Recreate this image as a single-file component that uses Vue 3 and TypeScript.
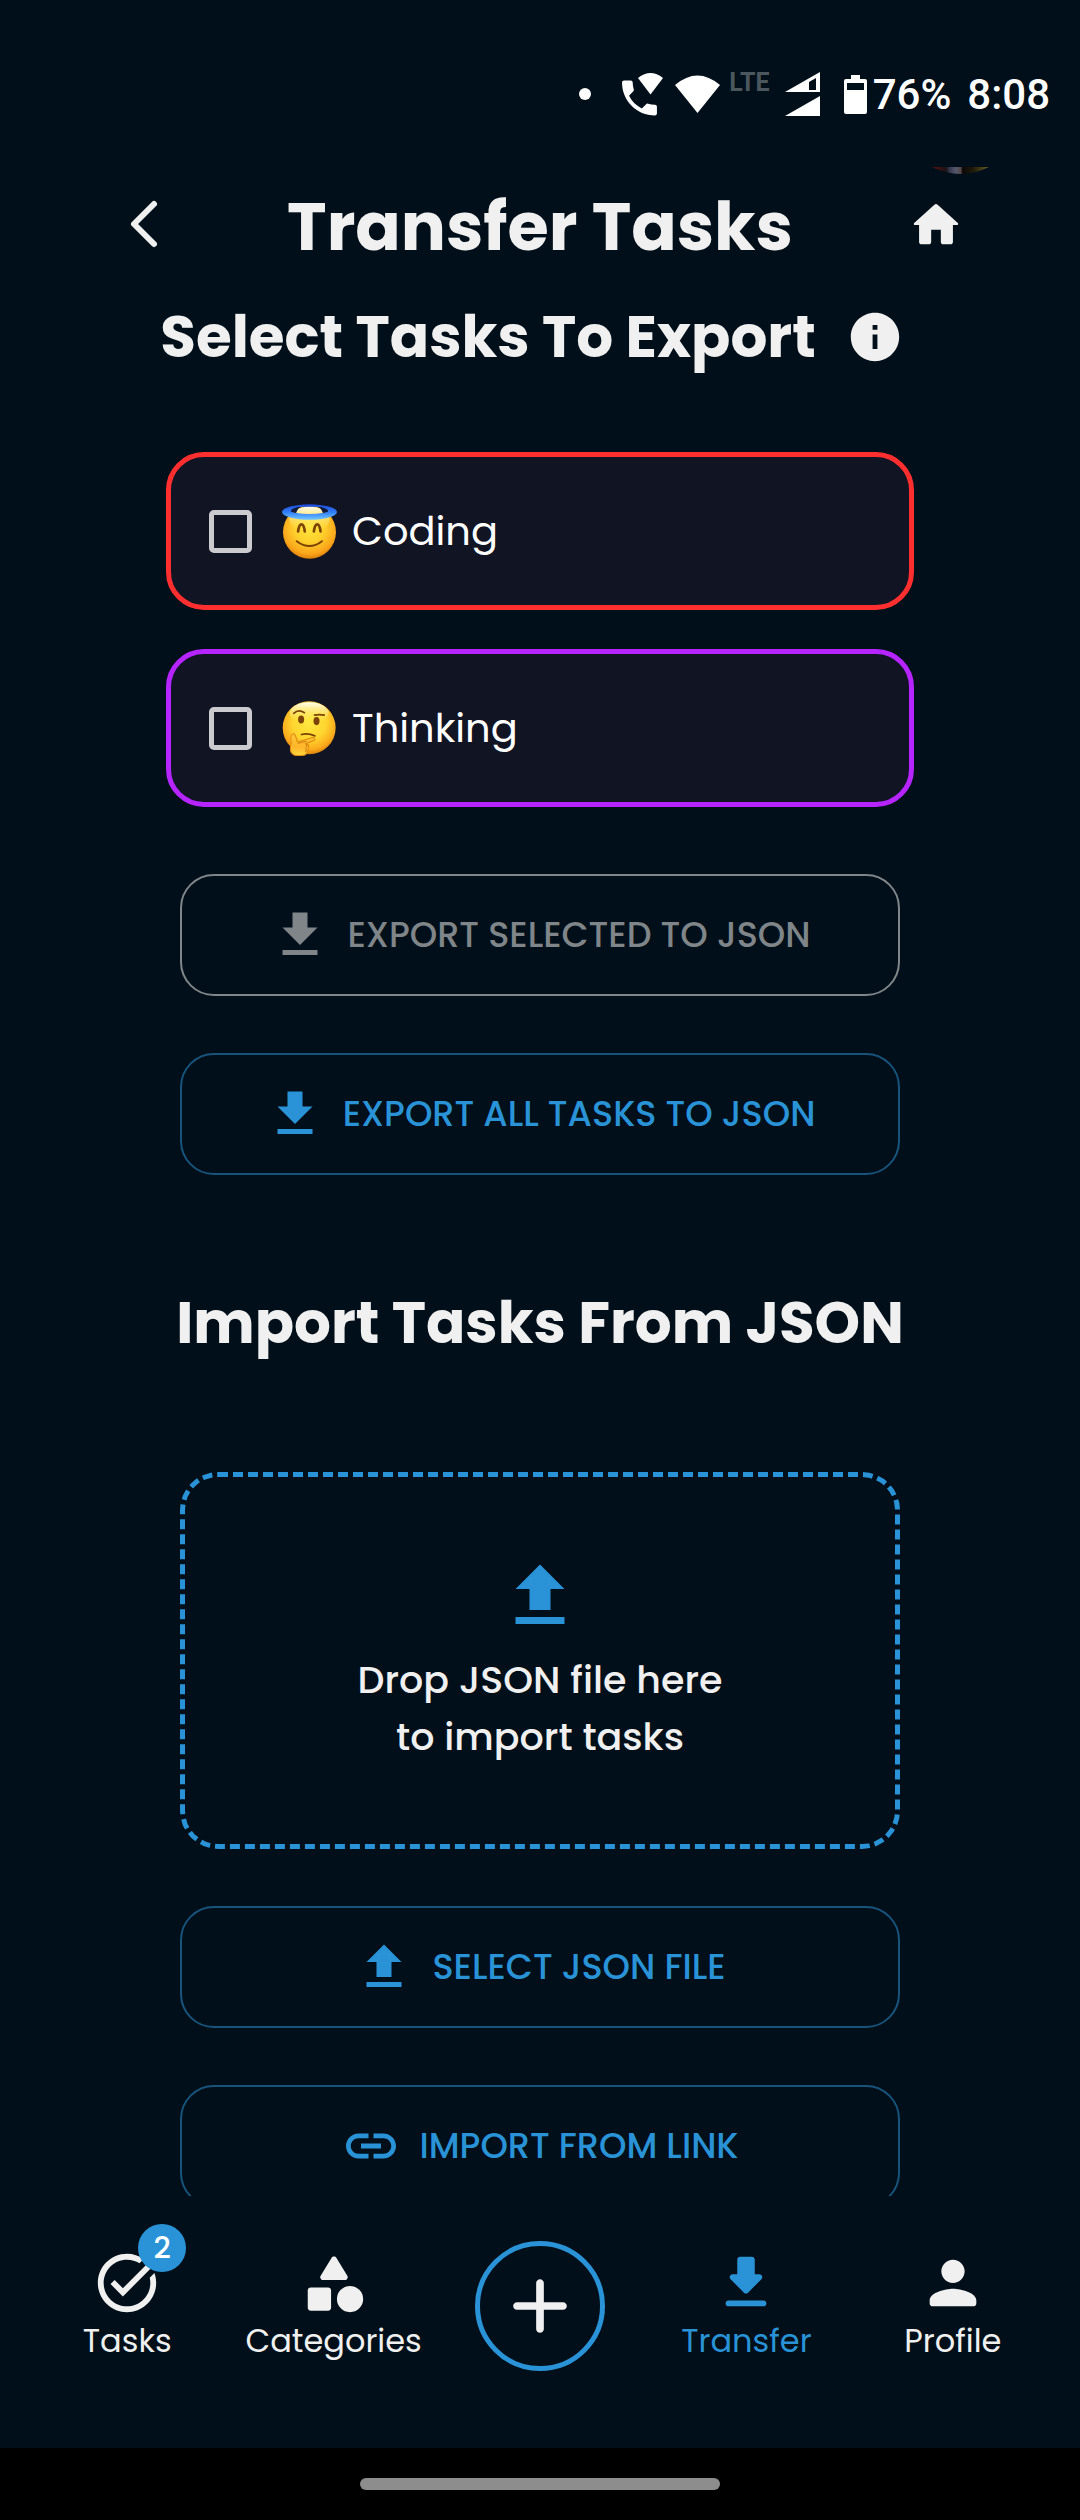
<script setup lang="ts">
import { computed, ref } from 'vue'

interface Task {
  id: string
  name: string
  color: string
}

interface NavItem {
  label: string
  href: string
  icon: string
  badge?: number
  active?: boolean
}

const icons = {
  download: 'M19 9h-4V3H9v6H5l7 7zM5 18v2h14v-2z',
  upload: 'M5 20h14v-2H5zm0-10h4v6h6v-6h4l-7-7z',
  link: 'M3.9 12c0-1.71 1.39-3.1 3.1-3.1h4V7H7c-2.76 0-5 2.24-5 5s2.24 5 5 5h4v-1.9H7c-1.71 0-3.1-1.39-3.1-3.1M8 13h8v-2H8zm9-6h-4v1.9h4c1.71 0 3.1 1.39 3.1 3.1s-1.39 3.1-3.1 3.1h-4V17h4c2.76 0 5-2.24 5-5s-2.24-5-5-5',
  info: 'M12 2C6.48 2 2 6.48 2 12s4.48 10 10 10 10-4.48 10-10S17.52 2 12 2m1 15h-2v-6h2zm0-8h-2V7h2z',
  home: 'M10 19v-5h4v5c0 .55.45 1 1 1h3c.55 0 1-.45 1-1v-7h1.7c.46 0 .68-.57.33-.87L12.67 3.6c-.38-.34-.96-.34-1.34 0l-8.36 7.53c-.34.3-.13.87.33.87H5v7c0 .55.45 1 1 1h3c.55 0 1-.45 1-1',
  add: 'M18 13h-5v5c0 .55-.45 1-1 1s-1-.45-1-1v-5H6c-.55 0-1-.45-1-1s.45-1 1-1h5V6c0-.55.45-1 1-1s1 .45 1 1v5h5c.55 0 1 .45 1 1s-.45 1-1 1',
  tasks:
    'M22 5.18 10.59 16.6l-4.24-4.24 1.41-1.41 2.83 2.83 10-10zm-2.21 5.04c.13.57.21 1.17.21 1.78 0 4.42-3.58 8-8 8s-8-3.58-8-8 3.58-8 8-8c1.58 0 3.04.46 4.28 1.25l1.44-1.44C16.1 2.67 14.13 2 12 2 6.48 2 2 6.48 2 12s4.48 10 10 10 10-4.48 10-10c0-1.19-.22-2.33-.6-3.39z',
  categories:
    'M11.15 3.4 7.43 9.48c-.41.66.07 1.52.85 1.52h7.43c.78 0 1.26-.86.85-1.52L12.85 3.4c-.39-.64-1.31-.64-1.7 0M17.5 13a4.5 4.5 0 1 0 0 9 4.5 4.5 0 0 0 0-9M4 21.5h6c.55 0 1-.45 1-1v-6c0-.55-.45-1-1-1H4c-.55 0-1 .45-1 1v6c0 .55.45 1 1 1',
  transfer:
    'M16.59 9H15V4c0-.55-.45-1-1-1h-4c-.55 0-1 .45-1 1v5H7.41c-.89 0-1.34 1.08-.71 1.71l4.59 4.59c.39.39 1.02.39 1.41 0l4.59-4.59c.63-.63.19-1.71-.7-1.71M5 19c0 .55.45 1 1 1h12c.55 0 1-.45 1-1s-.45-1-1-1H6c-.55 0-1 .45-1 1',
  profile:
    'M12 12c2.21 0 4-1.79 4-4s-1.79-4-4-4-4 1.79-4 4 1.79 4 4 4m0 2c-2.67 0-8 1.34-8 4v1c0 .55.45 1 1 1h14c.55 0 1-.45 1-1v-1c0-2.66-5.33-4-8-4',
}

const tasks: Task[] = [
  { id: 'coding', name: 'Coding', color: '#ff2f2f' },
  { id: 'thinking', name: 'Thinking', color: '#b624ff' },
]

const selected = ref<string[]>([])
const nothingSelected = computed(() => selected.value.length === 0)

const leftNav: NavItem[] = [
  { label: 'Tasks', href: '#tasks', icon: icons.tasks, badge: tasks.length },
  { label: 'Categories', href: '#categories', icon: icons.categories },
]
const rightNav: NavItem[] = [
  { label: 'Transfer', href: '#transfer', icon: icons.transfer, active: true },
  { label: 'Profile', href: '#profile', icon: icons.profile },
]
</script>

<template>
  <div class="app">
    <div class="status">
      <div class="status-row">
        <span class="dot"></span>
        <svg class="s-phone" viewBox="0 0 44 44" aria-hidden="true">
          <path
            transform="translate(-4.8 2.7) scale(1.94)"
            d="M20 15.5c-1.25 0-2.45-.2-3.57-.57-.35-.11-.74-.03-1.02.24l-2.2 2.2c-2.83-1.44-5.15-3.75-6.59-6.58l2.2-2.21c.28-.27.36-.66.25-1.01C8.7 6.45 8.5 5.25 8.5 4c0-.55-.45-1-1-1H4c-.55 0-1 .45-1 1 0 9.39 7.61 17 17 17 .55 0 1-.45 1-1v-3.500c0-.55-.45-1-1-1z"
          />
          <path d="M17 6Q29.500-4 42 6L29.500 22.500z" />
        </svg>
        <svg class="s-wifi" viewBox="0 0 45 38" aria-hidden="true">
          <path d="M0 10Q22.500-9 45 10L22.500 38z" />
        </svg>
        <span class="lte">LTE</span>
        <svg class="s-signal" viewBox="0 0 35 44" aria-hidden="true">
          <path fill-rule="evenodd" d="M0 20 35 0V20zM24 18h7V6l-7 4z" />
          <path d="M0 44 35 24V44z" />
        </svg>
        <svg class="s-battery" viewBox="0 0 23 39" aria-hidden="true">
          <path
            fill-rule="evenodd"
            d="M7 0h9v4h5a2 2 0 0 1 2 2v31a2 2 0 0 1-2 2H2a2 2 0 0 1-2-2V6a2 2 0 0 1 2-2h5zM3 8v7h17V8z"
          />
        </svg>
        <span class="s-text">76%</span>
        <span class="s-text s-clock">8:08</span>
      </div>
    </div>

    <header class="top">
      <svg class="avatar" viewBox="0 0 57 8" aria-hidden="true">
        <defs>
          <linearGradient id="avatar-fill" x1="0" x2="1" y1="0" y2="0">
            <stop offset="0" stop-color="#5a1016" />
            <stop offset=".25" stop-color="#1c1214" />
            <stop offset=".3" stop-color="#34364c" />
            <stop offset=".42" stop-color="#55586f" />
            <stop offset=".5" stop-color="#54484a" />
            <stop offset=".54" stop-color="#0b0806" />
            <stop offset=".72" stop-color="#1f1a0a" />
            <stop offset="1" stop-color="#6b5d22" />
          </linearGradient>
        </defs>
        <path d="M0 0h57Q28.500 14 0 0z" fill="url(#avatar-fill)" />
      </svg>
      <button class="icon-btn" type="button" aria-label="Back">
        <svg class="chevron" viewBox="0 0 58 58" aria-hidden="true">
          <path d="M39 8 19 28 39 48" />
        </svg>
      </button>
      <h1>Transfer Tasks</h1>
      <button class="icon-btn" type="button" aria-label="Home">
        <svg class="i-head" viewBox="0 0 24 24" aria-hidden="true"><path :d="icons.home" /></svg>
      </button>
    </header>

    <main class="content">
      <div class="heading-row">
        <h2>Select Tasks To Export</h2>
        <button class="info" type="button" aria-label="More information">
          <svg class="i-head" viewBox="0 0 24 24" aria-hidden="true"><path :d="icons.info" /></svg>
        </button>
      </div>

      <div class="cards">
        <label v-for="task in tasks" :key="task.id" class="card" :style="{ borderColor: task.color }">
          <input v-model="selected" type="checkbox" :value="task.id" />
          <svg v-if="task.id === 'coding'" class="emoji" viewBox="0 0 164 164" aria-hidden="true">
            <defs>
              <radialGradient id="face-a" cx=".5" cy=".4" r=".64">
                <stop offset="0" stop-color="#ffe53c" />
                <stop offset=".45" stop-color="#ffd02c" />
                <stop offset=".8" stop-color="#fba51a" />
                <stop offset="1" stop-color="#cf7006" />
              </radialGradient>
              <linearGradient id="shine-a" x1="0" x2="0" y1="0" y2="1">
                <stop offset="0" stop-color="#fffdf0" />
                <stop offset="1" stop-color="#ffe53c" stop-opacity="0" />
              </linearGradient>
              <linearGradient id="halo" x1="0" x2="0" y1="0" y2="1">
                <stop offset="0" stop-color="#1d49d8" />
                <stop offset=".55" stop-color="#3484fb" />
                <stop offset="1" stop-color="#74c8ff" />
              </linearGradient>
            </defs>
            <circle cx="82" cy="84" r="79" fill="url(#face-a)" />
            <ellipse cx="82" cy="46" rx="60" ry="38" fill="url(#shine-a)" />
            <path
              d="M0 24a82 23 0 1 0 164 0a82 23 0 1 0-164 0zM27 20a55 12 0 1 1 110 0a55 10 0 1 1-110 0z"
              fill="url(#halo)"
              fill-rule="evenodd"
            />
            <path
              d="M27 21Q36 10 56 8Q46 14 42 27Q29 26 27 21zM137 21Q128 10 108 8Q118 14 122 27Q135 26 137 21z"
              fill="#101a3c"
            />
            <path
              d="M48 82Q51 61 58 61Q65 61 68 82M95 82Q98 61 105 61Q112 61 115 82"
              fill="none"
              stroke="#7b4406"
              stroke-width="8"
              stroke-linecap="round"
            />
            <path
              d="M44 111Q82 140 119 111"
              fill="none"
              stroke="#7b4406"
              stroke-width="6"
              stroke-linecap="round"
            />
          </svg>
          <svg v-else class="emoji" viewBox="0 0 164 164" aria-hidden="true">
            <defs>
              <radialGradient id="face-b" cx=".5" cy=".4" r=".64">
                <stop offset="0" stop-color="#ffe93f" />
                <stop offset=".5" stop-color="#ffd52f" />
                <stop offset=".8" stop-color="#fbaa1c" />
                <stop offset="1" stop-color="#cf7006" />
              </radialGradient>
              <linearGradient id="shine-b" x1="0" x2="0" y1="0" y2="1">
                <stop offset="0" stop-color="#fffef4" />
                <stop offset="1" stop-color="#ffe93f" stop-opacity="0" />
              </linearGradient>
              <linearGradient id="hand" x1="0" x2="0" y1="0" y2="1">
                <stop offset="0" stop-color="#ffc93a" />
                <stop offset=".6" stop-color="#ffb52a" />
                <stop offset="1" stop-color="#ffd83d" />
              </linearGradient>
            </defs>
            <circle cx="81" cy="80" r="79" fill="url(#face-b)" />
            <ellipse cx="81" cy="36" rx="58" ry="32" fill="url(#shine-b)" />
            <ellipse cx="57" cy="55" rx="9" ry="12" fill="#7b4406" />
            <ellipse cx="103" cy="60" rx="9" ry="12" fill="#7b4406" />
            <path
              d="M35 37Q49 23 67 35M97 42Q111 39 126 42M58 100Q78 95 98 104"
              fill="none"
              stroke="#7b4406"
              stroke-width="5"
              stroke-linecap="round"
            />
            <path
              d="M32 98C40 96 41 107 46 122L91 109Q101 109 97 117L74 126Q82 132 78 141Q78 156 68 161Q52 166 36 161Q25 157 25 142Q25 133 28 124Q23 103 32 98z"
              fill="url(#hand)"
              stroke="#e08a10"
              stroke-width="3"
              stroke-linejoin="round"
            />
            <path
              d="M48 126 72 120M70 127Q76 131 73 137M70 142Q75 146 70 151"
              fill="none"
              stroke="#d07c0c"
              stroke-width="3"
              stroke-linecap="round"
            />
          </svg>
          <span>{{ task.name }}</span>
        </label>
      </div>

      <div class="column">
        <button class="action" type="button" :disabled="nothingSelected">
          <svg viewBox="0 0 24 24" aria-hidden="true"><path :d="icons.download" /></svg>
          <span>EXPORT SELECTED TO JSON</span>
        </button>
        <button class="action" type="button">
          <svg viewBox="0 0 24 24" aria-hidden="true"><path :d="icons.download" /></svg>
          <span>EXPORT ALL TASKS TO JSON</span>
        </button>
      </div>

      <h2 class="import-title">Import Tasks From JSON</h2>

      <div class="column import">
        <div class="drop">
          <svg viewBox="0 0 24 24" aria-hidden="true"><path :d="icons.upload" /></svg>
          <p>Drop JSON file here<br />to import tasks</p>
        </div>
        <button class="action" type="button">
          <svg viewBox="0 0 24 24" aria-hidden="true"><path :d="icons.upload" /></svg>
          <span>SELECT JSON FILE</span>
        </button>
        <button class="action" type="button">
          <svg viewBox="0 0 24 24" aria-hidden="true"><path :d="icons.link" /></svg>
          <span>IMPORT FROM LINK</span>
        </button>
      </div>
    </main>

    <nav class="nav">
      <a v-for="item in leftNav" :key="item.label" class="nav-item" :href="item.href">
        <span class="nav-icon">
          <svg viewBox="0 0 24 24" aria-hidden="true"><path :d="item.icon" /></svg>
          <span v-if="item.badge" class="badge">{{ item.badge }}</span>
        </span>
        <span class="nav-label">{{ item.label }}</span>
      </a>
      <div class="nav-item">
        <button class="fab" type="button" aria-label="Add task">
          <svg viewBox="0 0 24 24" aria-hidden="true"><path :d="icons.add" /></svg>
        </button>
      </div>
      <a
        v-for="item in rightNav"
        :key="item.label"
        class="nav-item"
        :class="{ active: item.active }"
        :href="item.href"
      >
        <span class="nav-icon">
          <svg viewBox="0 0 24 24" aria-hidden="true"><path :d="item.icon" /></svg>
        </span>
        <span class="nav-label">{{ item.label }}</span>
      </a>
    </nav>

    <div class="gesture"><span></span></div>
  </div>
</template>

<style>
body {
  margin: 0;
  background: #000f19;
}
</style>

<style scoped>
.app {
  --blue: #2a93d7;
  --blue-dim: #17537b;
  --light: #f0f0f0;
  --grey: #7f8588;
  box-sizing: border-box;
  height: 100vh;
  display: flex;
  flex-direction: column;
  background: #000f19;
  color: var(--light);
  font-family: Poppins, Inter, "Noto Sans", sans-serif;
}

.app *,
.app *::before {
  box-sizing: border-box;
}

svg {
  display: block;
  flex: none;
  fill: currentColor;
}

button {
  font: inherit;
  color: inherit;
  background: none;
  border: 0;
  padding: 0;
  margin: 0;
  cursor: pointer;
}

/* Status bar */
.status {
  flex: none;
  height: 167px;
  padding: 72px 30px 0;
  color: #fff;
}

.status-row {
  display: flex;
  align-items: center;
  justify-content: flex-end;
  height: 44px;
  font-family: Roboto, sans-serif;
}

.dot {
  width: 12px;
  height: 12px;
  border-radius: 50%;
  background: #fff;
}

.s-phone {
  width: 44px;
  height: 44px;
  margin-left: 30px;
}

.s-wifi {
  width: 45px;
  height: 38px;
  margin-left: 10px;
}

.lte {
  align-self: flex-start;
  margin-left: 9px;
  font-size: 25px;
  line-height: 22px;
  font-weight: 700;
  color: #4c565d;
}

.s-signal {
  width: 35px;
  height: 44px;
  margin-left: 15px;
}

.s-battery {
  width: 23px;
  height: 39px;
  margin-left: 24px;
}

.s-text {
  margin-left: 6px;
  padding-top: 2px;
  font-size: 42px;
  line-height: 44px;
  font-weight: 500;
}

.s-clock {
  margin-left: 16px;
}

/* Header */
.top {
  position: relative;
  flex: none;
  display: flex;
  align-items: flex-start;
  justify-content: space-between;
  padding: 12px 10% 0;
}

.avatar {
  position: absolute;
  top: 0;
  right: 91px;
  width: 57px;
  height: 8px;
}

.icon-btn {
  display: flex;
  align-items: center;
  justify-content: center;
  width: 72px;
  height: 92px;
}

.i-head {
  width: 58px;
  height: 58px;
}

.chevron {
  width: 58px;
  height: 58px;
}

.chevron path {
  fill: none;
  stroke: currentColor;
  stroke-width: 6;
  stroke-linecap: round;
  stroke-linejoin: round;
}

h1,
h2,
p {
  margin: 0;
}

h1 {
  font-size: 67px;
  line-height: 96px;
  font-weight: 700;
}

h2 {
  font-size: 58px;
  line-height: 72px;
  font-weight: 700;
  white-space: nowrap;
}

/* Scrolling content */
.content {
  flex: 1;
  min-height: 0;
  overflow-y: auto;
  scrollbar-width: none;
  display: flex;
  flex-direction: column;
  align-items: center;
  padding: 26px 0 32px;
}

.content > * {
  flex: none;
}

.heading-row {
  display: flex;
  align-items: center;
  gap: 30px;
}

.info {
  padding-right: 16px;
}

.cards {
  width: 748px;
  max-width: calc(100% - 64px);
  margin-top: 79px;
  display: flex;
  flex-direction: column;
  gap: 39px;
}

.card {
  display: flex;
  align-items: center;
  height: 158px;
  padding: 0 38px;
  border: 5px solid;
  border-radius: 38px;
  background: #101423;
  color: #fff;
  font-size: 40px;
  line-height: 56px;
  cursor: pointer;
}

.card input {
  appearance: none;
  flex: none;
  width: 43px;
  height: 43px;
  margin: 0;
  border: 5px solid #cbcbcf;
  border-radius: 5px;
}

.card input:checked {
  background: #cbcbcf;
}

.emoji {
  width: 55px;
  height: 55px;
  margin: 0 15px 0 30px;
}

.column {
  width: 720px;
  max-width: calc(100% - 80px);
  margin-top: 67px;
  display: flex;
  flex-direction: column;
  gap: 57px;
}

.action {
  display: flex;
  align-items: center;
  justify-content: center;
  gap: 18px;
  height: 122px;
  border: 2px solid var(--blue-dim);
  border-radius: 34px;
  color: var(--blue);
  font-size: 35px;
  line-height: 48px;
  font-weight: 500;
}

.action:disabled {
  border-color: var(--grey);
  color: var(--grey);
  cursor: default;
}

.action svg {
  width: 60px;
  height: 60px;
}

.import-title {
  margin-top: 112px;
}

.import {
  margin-top: 113px;
}

.drop {
  display: flex;
  flex-direction: column;
  align-items: center;
  gap: 13px;
  padding: 77px 32px 79px;
  border: 5px dashed var(--blue);
  border-radius: 38px;
  font-size: 38px;
  line-height: 57px;
  font-weight: 500;
  text-align: center;
}

.drop svg {
  width: 84px;
  height: 84px;
  color: var(--blue);
}

/* Bottom navigation */
.nav {
  flex: none;
  height: 252px;
  display: flex;
  padding: 0 24px;
}

.nav-item {
  flex: 1 1 0;
  min-width: 0;
  display: flex;
  flex-direction: column;
  align-items: center;
  gap: 3px;
  padding-top: 52px;
  color: var(--light);
  text-decoration: none;
}

.nav-item.active {
  color: var(--blue);
}

.nav-icon {
  position: relative;
}

.nav-icon svg {
  width: 70px;
  height: 70px;
}

.nav-label {
  font-size: 32px;
  line-height: 40px;
}

.badge {
  position: absolute;
  top: -24px;
  right: -24px;
  width: 48px;
  height: 48px;
  border-radius: 50%;
  background: var(--blue);
  color: #fff;
  font-size: 30px;
  line-height: 48px;
  font-weight: 500;
  text-align: center;
}

.fab {
  display: flex;
  align-items: center;
  justify-content: center;
  width: 130px;
  height: 130px;
  margin-top: -7px;
  border: 5px solid var(--blue);
  border-radius: 50%;
}

.fab svg {
  width: 92px;
  height: 92px;
}

.gesture {
  flex: none;
  height: 72px;
  display: flex;
  align-items: center;
  justify-content: center;
  background: #000;
}

.gesture span {
  width: 33.333%;
  height: 12px;
  border-radius: 6px;
  background: #8d8d8d;
}
</style>
